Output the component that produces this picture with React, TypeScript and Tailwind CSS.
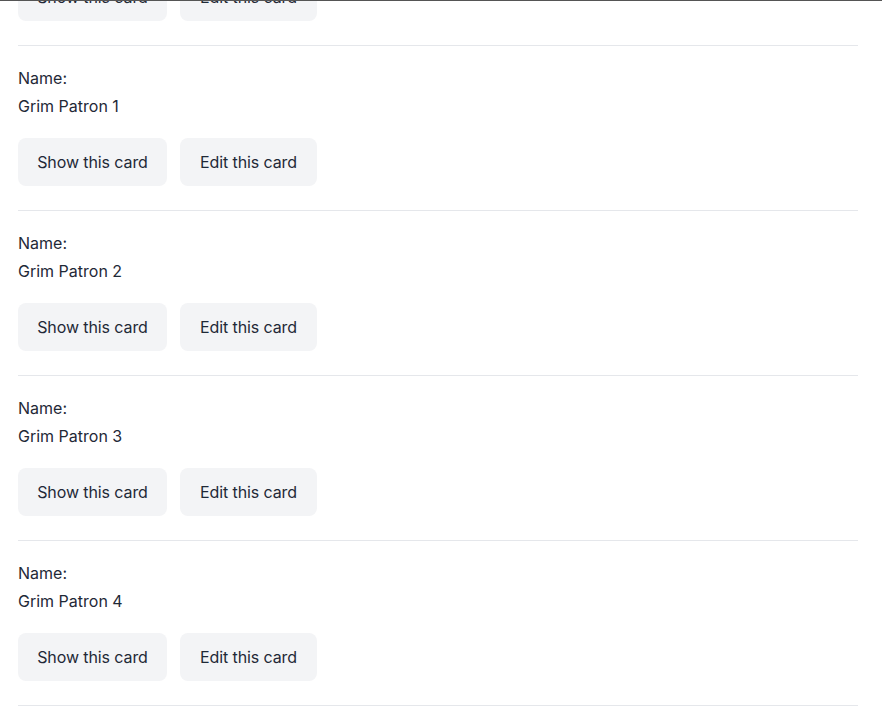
export default function App() {
  const cards = [0, 1, 2, 3, 4];

  return (
    <div className="h-[708px] overflow-hidden border-t border-[#555555] bg-white font-['Inter','Liberation_Sans',sans-serif] text-[16px] text-[#1f2937]">
      <div className="mt-[-120px] w-[840px] ml-[18px]">
        {cards.map((n) => (
          <div key={n} className="border-b border-[#e5e7eb] pt-[20px] pb-[24px]">
            <p className="leading-6">Name:</p>
            <p className="mt-[4px] leading-6">Grim Patron {n}</p>
            <div className="mt-[20px] flex gap-[13px]">
              <a
                href="#"
                className="flex h-[48px] w-[149px] items-center justify-center rounded-lg bg-[#f3f4f6] tracking-[-0.1px]"
              >
                Show this card
              </a>
              <a
                href="#"
                className="flex h-[48px] w-[137px] items-center justify-center rounded-lg bg-[#f3f4f6] tracking-[-0.1px]"
              >
                Edit this card
              </a>
            </div>
          </div>
        ))}
      </div>
    </div>
  );
}
